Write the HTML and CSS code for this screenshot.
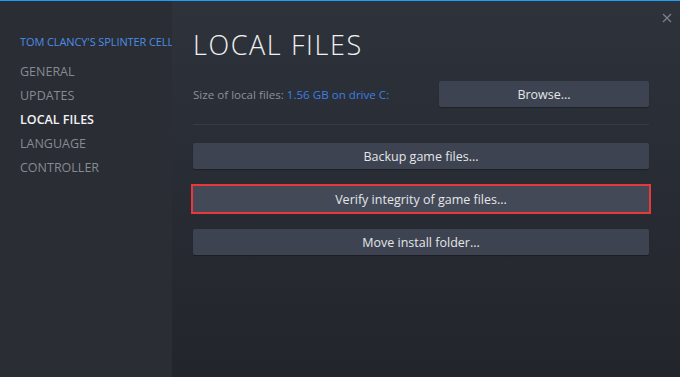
FILE: index.html
```html
<!DOCTYPE html>
<html lang="en">
<head>
    <meta charset="UTF-8">
    <meta name="viewport" content="width=device-width, initial-scale=1.0">
    <title>Properties - Local Files</title>
    <link rel="stylesheet" href="styles.css">
</head>
<body>
    <div class="window">
        <div class="sidebar">
            <div class="game-title">TOM CLANCY'S SPLINTER CELL</div>
            <div class="nav-item">GENERAL</div>
            <div class="nav-item">UPDATES</div>
            <div class="nav-item active">LOCAL FILES</div>
            <div class="nav-item">LANGUAGE</div>
            <div class="nav-item">CONTROLLER</div>
        </div>
        <div class="content">
            <div class="close">
                <svg width="10" height="10" viewBox="0 0 10 10"><path d="M1 1L9 9M9 1L1 9" stroke="#7b818b" stroke-width="1.3"/></svg>
            </div>
            <h1>LOCAL FILES</h1>
            <div class="size-row">
                <div class="size-text">Size of local files: <span class="size-value">1.56 GB on drive C:</span></div>
                <button class="btn browse">Browse...</button>
            </div>
            <div class="divider"></div>
            <div class="actions">
                <button class="btn">Backup game files...</button>
                <button class="btn highlight">Verify integrity of game files...</button>
                <button class="btn">Move install folder...</button>
            </div>
        </div>
    </div>
</body>
</html>
```

FILE: styles.css
```css
html, body {
    margin: 0;
    padding: 0;
    height: 100%;
}
body {
    font-family: "Open Sans", "Liberation Sans", sans-serif;
    background: #1a1c21;
}
.window {
    display: flex;
    height: 376px;
    border-top: 1px solid #1a9fff;
}
.sidebar {
    width: 172px;
    flex-shrink: 0;
    background: #2a2d34;
    padding-top: 32px;
    padding-left: 20px;
    box-sizing: border-box;
    overflow: hidden;
    white-space: nowrap;
}
.game-title {
    color: #4a8ee6;
    font-size: 11px;
    letter-spacing: -0.1px;
    height: 18px;
    line-height: 18px;
    margin-bottom: 9px;
}
.nav-item {
    color: #868b93;
    font-size: 12.5px;
    height: 24px;
    line-height: 24px;
}
.nav-item.active {
    color: #f2f3f4;
    font-weight: 600;
}
.content {
    flex: 1;
    position: relative;
    background: linear-gradient(to bottom, #2e323a, #22252c);
    padding: 24px 31px 0 21px;
}
.close {
    position: absolute;
    top: 5px;
    right: 8px;
}
h1 {
    margin: 0;
    height: 40px;
    line-height: 40px;
    font-size: 27px;
    font-weight: 300;
    letter-spacing: 1.6px;
    color: #f0f1f2;
}
.size-row {
    display: flex;
    align-items: center;
    justify-content: space-between;
    margin-top: 16px;
}
.size-text {
    font-size: 11.6px;
    color: #8b9098;
}
.size-value {
    color: #3b7fe4;
}
.btn {
    background: #3d4350;
    color: #e4e6e9;
    border: none;
    border-radius: 2px;
    font-family: inherit;
    font-size: 12.5px;
    height: 26px;
    padding: 0;
    box-shadow: 0 1px 1px rgba(0, 0, 0, 0.3);
}
.browse {
    width: 210px;
}
.divider {
    height: 1px;
    background: #353a43;
    margin-top: 17px;
}
.actions {
    display: flex;
    flex-direction: column;
    gap: 17px;
    margin-top: 18px;
}
.actions .btn {
    width: 100%;
}
.highlight {
    outline: 2px solid #e8383b;
    outline-offset: 0;
    border-radius: 0;
    background: #434957;
}
```
